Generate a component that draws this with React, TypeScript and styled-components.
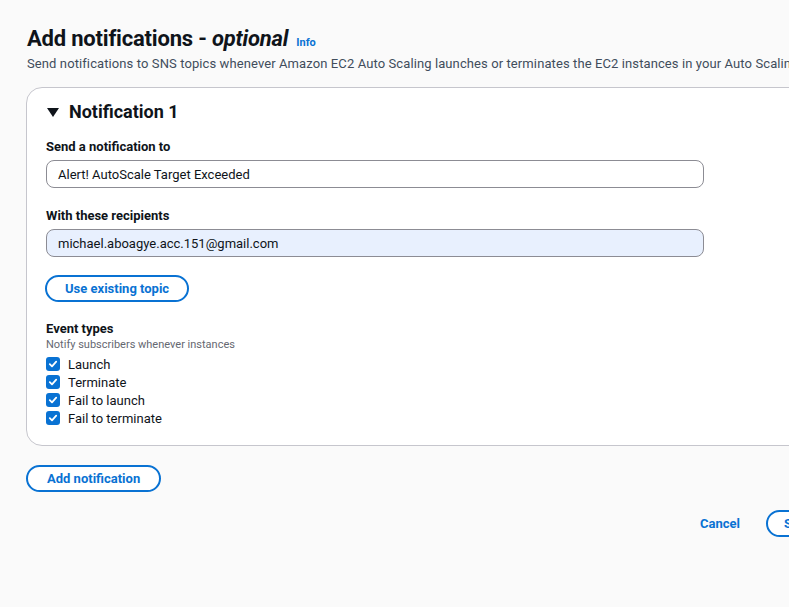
import React from "react";
import styled, { createGlobalStyle } from "styled-components";

const Global = createGlobalStyle`
  html, body { margin: 0; padding: 0; background: #fafafa; overflow: hidden; }
  body { font-family: Roboto, "Liberation Sans", Arial, sans-serif; color: #0f141a; }
  * { box-sizing: border-box; }
`;

const Page = styled.div`
  width: 1100px;
  padding: 25px 0 0 26px;
  display: flex;
  flex-direction: column;
`;

const Header = styled.div`
  display: flex;
  flex-direction: column;
  gap: 2px;
  padding-left: 1px;
`;

const TitleRow = styled.div`
  display: flex;
  align-items: baseline;
  gap: 8px;
`;

const Title = styled.h1`
  margin: 0;
  font-size: 22px;
  font-weight: 700;
  line-height: 28px;
  letter-spacing: -0.2px;
  em { font-style: italic; font-weight: 700; }
`;

const InfoLink = styled.a`
  font-size: 11px;
  font-weight: 700;
  color: #0972d3;
  text-decoration: none;
`;

const Description = styled.p`
  margin: 0;
  font-size: 13px;
  line-height: 18px;
  letter-spacing: 0.1px;
  color: #414d5c;
  white-space: nowrap;
`;

const Card = styled.section`
  margin-top: 14px;
  background: #ffffff;
  border: 1px solid #c6c6cd;
  border-radius: 16px;
  padding: 12px 19px 18px 19px;
  display: flex;
  flex-direction: column;
`;

const CardHeader = styled.div`
  display: flex;
  align-items: center;
  gap: 10px;
  height: 24px;
  margin-bottom: 14px;
`;

const Caret = styled.span`
  width: 0;
  height: 0;
  border-left: 6px solid transparent;
  border-right: 6px solid transparent;
  border-top: 9px solid #0f141a;
  margin-left: 1px;
`;

const CardTitle = styled.h2`
  margin: 0;
  font-size: 18px;
  font-weight: 700;
  line-height: 24px;
`;

const Field = styled.div<{ $mb?: number }>`
  display: flex;
  flex-direction: column;
  gap: 4px;
  margin-bottom: ${(p) => p.$mb ?? 0}px;
`;

const Label = styled.label`
  font-size: 13px;
  font-weight: 700;
  line-height: 18px;
`;

const Input = styled.div<{ $filled?: boolean }>`
  width: 658px;
  height: 28px;
  flex: 0 0 28px;
  border: 1px solid #8c8c94;
  border-radius: 8px;
  background: ${(p) => (p.$filled ? "#e8f0fe" : "#ffffff")};
  padding: 0 11px;
  display: flex;
  align-items: center;
  font-size: 13px;
`;

const OutlineButton = styled.button`
  align-self: flex-start;
  height: 27px;
  padding: 0 18px;
  border: 2px solid #0972d3;
  border-radius: 20px;
  background: #ffffff;
  color: #0972d3;
  font-family: inherit;
  font-size: 13px;
  font-weight: 700;
  display: flex;
  align-items: center;
`;

const TopicButton = styled(OutlineButton)`
  margin-left: -1px;
`;

const EventSection = styled.div`
  margin-top: 18px;
  display: flex;
  flex-direction: column;
`;

const Hint = styled.div`
  font-size: 11px;
  line-height: 14px;
  color: #656871;
  margin-bottom: 3px;
`;

const CheckList = styled.div`
  display: flex;
  flex-direction: column;
`;

const CheckRow = styled.div`
  display: flex;
  align-items: center;
  gap: 8px;
  height: 18px;
  font-size: 13px;
`;

const Box = styled.span`
  width: 14px;
  height: 14px;
  border-radius: 3px;
  background: #0972d3;
  display: flex;
  align-items: center;
  justify-content: center;
`;

const BottomButton = styled(OutlineButton)`
  margin-top: 19px;
  padding: 0 19px;
`;

const Footer = styled.div`
  width: 789px;
  margin-left: -26px;
  margin-top: 18px;
  display: flex;
  justify-content: flex-end;
  align-items: center;
  gap: 26px;
`;

const TextButton = styled.button`
  border: none;
  background: none;
  color: #0972d3;
  font-family: inherit;
  font-size: 13px;
  font-weight: 700;
  padding: 0;
`;

const CutButton = styled(OutlineButton)`
  width: 60px;
  margin-right: -37px;
  align-self: center;
  padding: 0 0 0 16px;
`;

const Check = () => (
  <Box>
    <svg width="10" height="10" viewBox="0 0 10 10">
      <path d="M1.8 5.2 L4 7.3 L8.2 2.6" fill="none" stroke="#fff" strokeWidth="1.8" strokeLinecap="round" strokeLinejoin="round" />
    </svg>
  </Box>
);

const events = ["Launch", "Terminate", "Fail to launch", "Fail to terminate"];

export default function App() {
  return (
    <>
      <Global />
      <Page>
        <Header>
          <TitleRow>
            <Title>
              Add notifications - <em>optional</em>
            </Title>
            <InfoLink>Info</InfoLink>
          </TitleRow>
          <Description>
            Send notifications to SNS topics whenever Amazon EC2 Auto Scaling launches or terminates the EC2 instances in your Auto Scaling group.
          </Description>
        </Header>
        <Card>
          <CardHeader>
            <Caret />
            <CardTitle>Notification 1</CardTitle>
          </CardHeader>
          <Field $mb={19}>
            <Label>Send a notification to</Label>
            <Input>Alert! AutoScale Target Exceeded</Input>
          </Field>
          <Field $mb={18}>
            <Label>With these recipients</Label>
            <Input $filled>michael.aboagye.acc.151@gmail.com</Input>
          </Field>
          <TopicButton>Use existing topic</TopicButton>
          <EventSection>
            <Label>Event types</Label>
            <Hint>Notify subscribers whenever instances</Hint>
            <CheckList>
              {events.map((e) => (
                <CheckRow key={e}>
                  <Check />
                  {e}
                </CheckRow>
              ))}
            </CheckList>
          </EventSection>
        </Card>
        <BottomButton>Add notification</BottomButton>
        <Footer>
          <TextButton>Cancel</TextButton>
          <CutButton>Skip</CutButton>
        </Footer>
      </Page>
    </>
  );
}
